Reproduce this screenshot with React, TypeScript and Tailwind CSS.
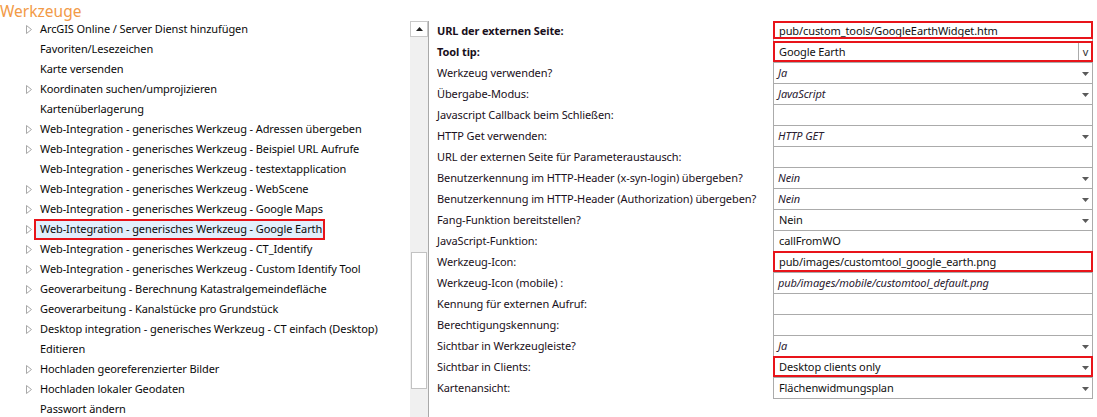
import React from "react";

const tree: { t: string; c: boolean }[] = [
  { t: "ArcGIS Online / Server Dienst hinzufügen", c: true },
  { t: "Favoriten/Lesezeichen", c: false },
  { t: "Karte versenden", c: false },
  { t: "Koordinaten suchen/umprojizieren", c: true },
  { t: "Kartenüberlagerung", c: false },
  { t: "Web-Integration - generisches Werkzeug - Adressen übergeben", c: true },
  { t: "Web-Integration - generisches Werkzeug - Beispiel URL Aufrufe", c: true },
  { t: "Web-Integration - generisches Werkzeug - testextapplication", c: false },
  { t: "Web-Integration - generisches Werkzeug - WebScene", c: true },
  { t: "Web-Integration - generisches Werkzeug - Google Maps", c: true },
  { t: "Web-Integration - generisches Werkzeug - Google Earth", c: true },
  { t: "Web-Integration - generisches Werkzeug - CT_Identify", c: true },
  { t: "Web-Integration - generisches Werkzeug - Custom Identify Tool", c: true },
  { t: "Geoverarbeitung - Berechnung Katastralgemeindefläche", c: true },
  { t: "Geoverarbeitung - Kanalstücke pro Grundstück", c: true },
  { t: "Desktop integration - generisches Werkzeug - CT einfach (Desktop)", c: true },
  { t: "Editieren", c: false },
  { t: "Hochladen georeferenzierter Bilder", c: true },
  { t: "Hochladen lokaler Geodaten", c: true },
  { t: "Passwort ändern", c: false },
];

type Prop = {
  label: string;
  bold?: boolean;
  value?: string;
  italic?: boolean;
  dd?: boolean;
  red?: boolean;
  v?: boolean;
};

const props: Prop[] = [
  { label: "URL der externen Seite:", bold: true, value: "pub/custom_tools/GoogleEarthWidget.htm", red: true },
  { label: "Tool tip:", bold: true, value: "Google Earth", red: true, v: true },
  { label: "Werkzeug verwenden?", value: "Ja", italic: true, dd: true },
  { label: "Übergabe-Modus:", value: "JavaScript", italic: true, dd: true },
  { label: "Javascript Callback beim Schließen:" },
  { label: "HTTP Get verwenden:", value: "HTTP GET", italic: true, dd: true },
  { label: "URL der externen Seite für Parameteraustausch:" },
  { label: "Benutzerkennung im HTTP-Header (x-syn-login) übergeben?", value: "Nein", italic: true, dd: true },
  { label: "Benutzerkennung im HTTP-Header (Authorization) übergeben?", value: "Nein", italic: true, dd: true },
  { label: "Fang-Funktion bereitstellen?", value: "Nein", dd: true },
  { label: "JavaScript-Funktion:", value: "callFromWO" },
  { label: "Werkzeug-Icon:", value: "pub/images/customtool_google_earth.png", red: true },
  { label: "Werkzeug-Icon (mobile) :", value: "pub/images/mobile/customtool_default.png", italic: true },
  { label: "Kennung für externen Aufruf:" },
  { label: "Berechtigungskennung:" },
  { label: "Sichtbar in Werkzeugleiste?", value: "Ja", italic: true, dd: true },
  { label: "Sichtbar in Clients:", value: "Desktop clients only", dd: true, red: true },
  { label: "Kartenansicht:", value: "Flächenwidmungsplan", dd: true },
];

function Tri() {
  return (
    <svg width="7" height="9" viewBox="0 0 7 9" className="block">
      <polygon points="0.5,0.5 5.5,4.5 0.5,8.5" fill="white" stroke="#a8a8a8" strokeWidth="1" />
    </svg>
  );
}

function DownArrow() {
  return (
    <svg width="8" height="4" viewBox="0 0 8 4" className="block">
      <polygon points="0,0 7,0 3.5,4" fill="#5a5a5a" />
    </svg>
  );
}

export default function App() {
  return (
    <div className="w-[1097px] h-[417px] overflow-hidden bg-white flex font-['Noto_Sans',sans-serif] text-[11px] tracking-[-0.1px] text-[#111]">
      {/* Left tree */}
      <div className="w-[410px] shrink-0 flex flex-col">
        <div className="h-[19px] text-[15.5px] leading-[19px] tracking-normal text-[#f29a47] pt-[2px]">Werkzeuge</div>
        {tree.map((r, i) => {
          const sel = i === 10;
          return (
            <div key={i} className="h-[20px] flex items-center pl-[26px] shrink-0">
              <div className="w-[8px] flex items-center">{r.c ? <Tri /> : null}</div>
              <span
                className={
                  "h-[21px] flex items-center whitespace-nowrap text-[#0a0a0a] " +
                  (sel ? "border-2 border-[#e8141a] bg-[#e1effc] pl-[4px] pr-[1px]" : "pl-[6px] pr-[3px]")
                }
              >
                {r.t}
              </span>
            </div>
          );
        })}
      </div>

      {/* Scrollbar */}
      <div className="w-[19px] shrink-0 mt-[21px] flex flex-col border-r border-[#a9a9a9]">
        <div className="h-[16px] w-[18px] border border-[#c9c9c9] bg-white flex items-center justify-center">
          <svg width="7" height="4" viewBox="0 0 7 4" className="block">
            <polygon points="0,4 7,4 3.5,0" fill="#222" />
          </svg>
        </div>
        <div className="flex-1 bg-[#f0f0f0] pt-[215px] px-[1px]">
          <div className="h-[137px] w-[16px] bg-white border border-[#c2c2c2]" />
        </div>
      </div>

      {/* Property grid */}
      <div className="flex-1 pt-[21px] pr-[4px]">
        {props.map((p, i) => (
          <div key={i} className="h-[21px] flex">
            <div
              className={
                "w-[344px] shrink-0 pl-[8px] flex items-center whitespace-nowrap overflow-hidden text-[#1a1020] " +
                (p.bold ? "font-bold text-[#0a0a0a]" : "")
              }
            >
              {p.label}
            </div>
            <div
              className={
                "relative flex-1 flex items-center border-x border-b border-[#ababab] " +
                (i === 0 ? "border-t" : "")
              }
            >
              <span className={"whitespace-nowrap " + (p.italic ? "italic pl-[4px] text-[#2a2030]" : "pl-[5px]")}>
                {p.value ?? ""}
              </span>
              {p.dd ? (
                <div className="absolute right-[2px] top-[9px]">
                  <DownArrow />
                </div>
              ) : null}
              {p.v ? (
                <div className="absolute right-0 top-0 bottom-0 w-[14px] border-l border-[#ababab] flex items-center justify-center text-[11px] text-[#333]">
                  v
                </div>
              ) : null}
              {p.red ? (
                <div
                  className={
                    "absolute -left-[1px] -right-[1px] -top-[1px] border-2 border-[#e8141a] pointer-events-none " +
                    (i === 0 ? "bottom-[2px]" : "bottom-0")
                  }
                />
              ) : null}
            </div>
          </div>
        ))}
      </div>
    </div>
  );
}
